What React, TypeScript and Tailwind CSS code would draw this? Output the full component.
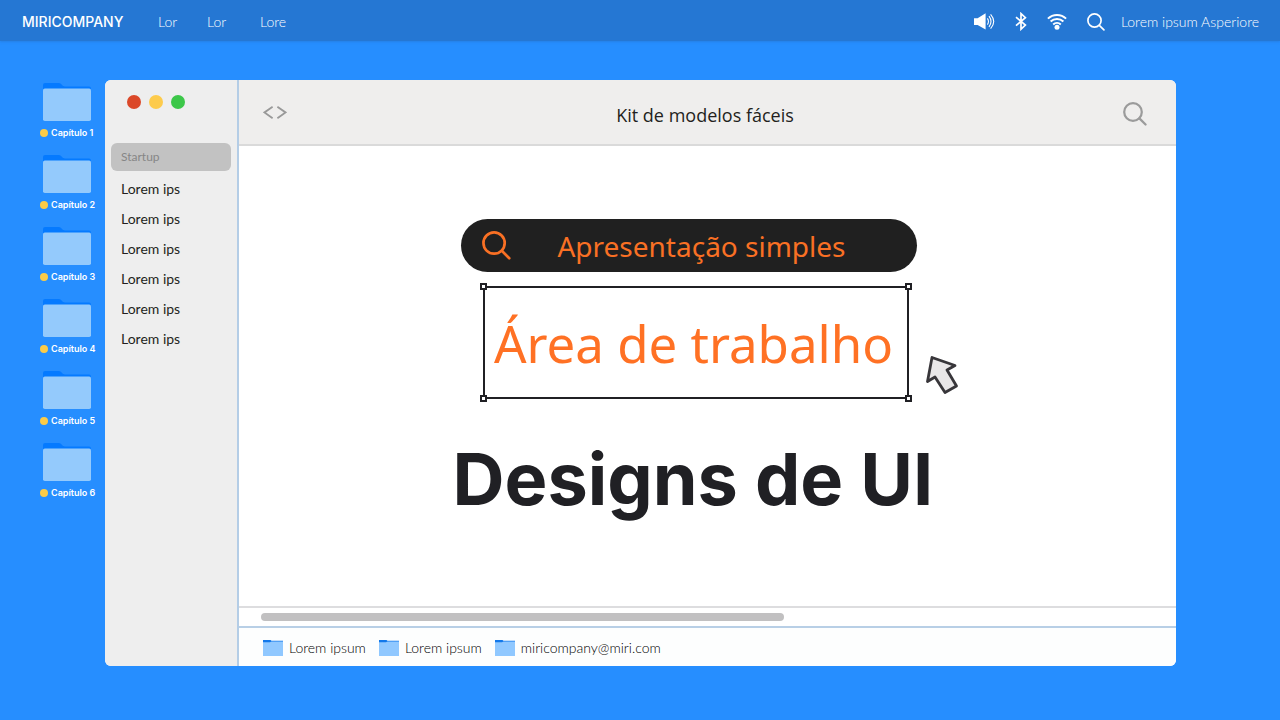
import React from "react";

const chapters = ["Capítulo 1", "Capítulo 2", "Capítulo 3", "Capítulo 4", "Capítulo 5", "Capítulo 6"];
const menu = ["Lorem ips", "Lorem ips", "Lorem ips", "Lorem ips", "Lorem ips", "Lorem ips"];
const bookmarks = ["Lorem ipsum", "Lorem ipsum", "miricompany@miri.com"];

function SearchIcon({ className, stroke }: { className: string; stroke: number }) {
  return (
    <svg viewBox="0 0 30 30" className={className} fill="none" stroke="currentColor" strokeWidth={stroke} strokeLinecap="round" aria-hidden="true">
      <circle cx="12.5" cy="12.5" r="11" />
      <path d="M20.5 20.5 28.2 28.2" />
    </svg>
  );
}

function VolumeIcon() {
  return (
    <svg viewBox="0 0 21 17" className="h-[17px] w-[21px]" fill="none" stroke="currentColor" aria-hidden="true">
      <path d="M0 5.2h3.6L11.6.3v16.2L3.6 12H0z" fill="currentColor" stroke="none" />
      <path d="M13.4 5.4c1.3 1.9 1.3 4.3 0 6.2M15 3.2c2.5 3.3 2.5 7.3 0 10.6M16.6 1.3c3.9 4.5 3.9 9.9 0 14.4" strokeWidth="1.1" />
    </svg>
  );
}

function BluetoothIcon() {
  return (
    <svg viewBox="0 0 12 19" className="h-[19px] w-3" fill="none" stroke="currentColor" strokeWidth="1.7" aria-hidden="true">
      <path d="M1 5.2 10.4 13 6 17.2V1.6l4.4 4.1L1 13.6" />
    </svg>
  );
}

function WifiIcon() {
  return (
    <svg viewBox="0 0 20 17" className="h-[17px] w-5" fill="none" stroke="currentColor" strokeWidth="2" aria-hidden="true">
      <path d="M.9 5.6a13.2 13.2 0 0 1 18.2 0M3.6 8.6a9.3 9.3 0 0 1 12.8 0M6.2 11.4a5.6 5.6 0 0 1 7.6 0" />
      <circle cx="10" cy="14.2" r="2.5" fill="currentColor" stroke="none" />
    </svg>
  );
}

function DesktopFolder() {
  return (
    <svg viewBox="0 0 48 38" className="ml-[3px] h-[38px] w-12" aria-hidden="true">
      <path d="M0 2a2 2 0 0 1 2-2h14c2 0 3.5 3.5 6 3.5h24a2 2 0 0 1 2 2V12H0z" fill="#057aff" />
      <rect y="5.5" width="48" height="32.5" rx="1.8" fill="#94cafc" />
    </svg>
  );
}

function SmallFolder() {
  return (
    <svg viewBox="0 0 20 16" className="h-4 w-5" aria-hidden="true">
      <path d="M0 0h7.5l1 .8H20V3H0z" fill="#1278ea" />
      <path d="M0 2.3h7L8.5 1.5H20V16H0z" fill="#90c8ff" />
    </svg>
  );
}

function Handle({ className }: { className: string }) {
  return <span className={`absolute size-[7px] border-2 border-[#202024] bg-white ${className}`} />;
}

export default function App() {
  return (
    <div className="flex min-h-screen flex-col bg-[#268eff] font-['Lato',sans-serif] text-[#231f20]">
      <header className="flex h-[41px] items-center bg-[#2577d3] pt-[2px] pr-[21px] pl-[22px] text-sm font-light text-white shadow-[0_1px_2px_rgba(37,119,211,0.6)]">
        <a href="#" className="w-[136px] font-['Inter',sans-serif] text-sm font-medium">MIRICOMPANY</a>
        <nav className="flex">
          <a href="#" className="w-[49px]">Lor</a>
          <a href="#" className="w-[53px]">Lor</a>
          <a href="#">Lore</a>
        </nav>
        <div className="ml-auto flex items-center gap-4">
          <div className="flex items-center gap-5">
            <button type="button" aria-label="Volume"><VolumeIcon /></button>
            <button type="button" aria-label="Bluetooth"><BluetoothIcon /></button>
            <button type="button" aria-label="Wi-Fi"><WifiIcon /></button>
            <button type="button" aria-label="Buscar"><SearchIcon className="size-[18px]" stroke={2.8} /></button>
          </div>
          <span className="whitespace-nowrap">Lorem ipsum Asperiore</span>
        </div>
      </header>

      <div className="flex flex-1 pt-[39px] pr-[104px] pb-[54px] pl-[40px]">
        <ul className="w-[65px] shrink-0 pt-[3px]">
          {chapters.map((name) => (
            <li key={name} className="h-[72px]">
              <a href="#" className="flex w-[54px] flex-col items-start">
                <DesktopFolder />
                <span className="mt-[6px] flex items-center gap-[3px] font-['Inter',sans-serif] text-[9px] leading-3 font-semibold whitespace-nowrap text-white">
                  <span className="size-2 rounded-full bg-[#fccb47]" />
                  {name}
                </span>
              </a>
            </li>
          ))}
        </ul>

        <div className="flex min-w-0 flex-1 overflow-hidden rounded-md bg-white">
          <aside className="w-[134px] shrink-0 border-r-2 border-[#b4cde6] bg-[#eeeeee] px-[6px] pt-[15px]">
            <div className="flex gap-2 pl-4">
              <button type="button" aria-label="Fechar" className="size-[14px] rounded-full bg-[#db4829]" />
              <button type="button" aria-label="Minimizar" className="size-[14px] rounded-full bg-[#fdcb4c]" />
              <button type="button" aria-label="Maximizar" className="size-[14px] rounded-full bg-[#3cc749]" />
            </div>
            <nav className="mt-[34px] flex flex-col text-sm">
              <a href="#" className="mb-[3px] flex h-7 w-[120px] items-center rounded-md bg-[#c2c2c2] pl-[10px] text-xs text-[#868686]">Startup</a>
              {menu.map((label, i) => (
                <a key={i} href="#" className="flex h-[30px] items-center pl-[10px]">{label}</a>
              ))}
            </nav>
          </aside>

          <div className="flex min-w-0 flex-1 flex-col">
            <div className="grid h-[66px] grid-cols-[1fr_auto_1fr] items-center border-b-2 border-[#dadada] bg-[#efeeed] pr-[29px] pl-6">
              <button type="button" aria-label="Código" className="justify-self-start text-[#999999]">
                <svg viewBox="0 0 24 13" className="h-[13px] w-6" fill="none" stroke="currentColor" strokeWidth="1.8" aria-hidden="true">
                  <path d="M9.6.8 1.5 6.4l8.1 5.8M14.4.8l8.1 5.6-8.1 5.8" />
                </svg>
              </button>
              <h2 className="pt-[6px] font-['Open_Sans','Noto_Sans',sans-serif] text-lg">Kit de modelos fáceis</h2>
              <button type="button" aria-label="Pesquisar" className="justify-self-end pt-1 text-[#9b9b9b]">
                <SearchIcon className="size-6" stroke={2.8} />
              </button>
            </div>

            <main className="flex flex-1 justify-center pt-[73px] pr-[30px]">
              <div className="w-[480px]">
                <label className="ml-2 flex h-[53px] w-[456px] items-center rounded-full bg-[#202020] pr-[36px] pl-[21px] text-[#f97024]">
                  <SearchIcon className="size-[29px] shrink-0" stroke={2.8} />
                  <input
                    type="text"
                    aria-label="Apresentação"
                    defaultValue="Apresentação simples"
                    className="ml-3 min-w-0 flex-1 bg-transparent text-center font-['Noto_Sans',sans-serif] text-[28px] leading-9 outline-none"
                  />
                </label>
                <div className="relative mt-[14px] ml-[30px] flex h-[113px] w-[426px] items-center justify-center border-2 border-[#202024] pt-[2px] pr-1">
                  <p className="font-['Noto_Sans',sans-serif] text-[51px] leading-none whitespace-nowrap text-[#ff7124]">Área de trabalho</p>
                  <Handle className="-top-[5px] -left-[5px]" />
                  <Handle className="-top-[5px] -right-[5px]" />
                  <Handle className="-bottom-[5px] -left-[5px]" />
                  <Handle className="-right-[5px] -bottom-[5px]" />
                  <svg viewBox="0 0 34 40" className="absolute top-[67px] left-[440px] h-10 w-[34px]" fill="#e9e7e8" stroke="#38363a" strokeWidth="2.8" strokeLinejoin="round" aria-hidden="true">
                    <path d="M7 2.5 30 10.5 22 15 31.5 31 20 37.5 10 22 2.5 26.5z" />
                  </svg>
                </div>
                <h1 className="mt-[35px] font-['Inter',sans-serif] text-[72px] leading-[90px] font-bold whitespace-nowrap text-[#202024]">Designs de UI</h1>
              </div>
            </main>

            <div className="flex h-[22px] items-center border-t-2 border-b-2 border-t-[#dddddf] border-b-[#b8cfe6] pl-[22px]">
              <div className="h-2 w-4/7 rounded-full bg-[#c1c0c1]" />
            </div>
            <footer className="flex h-[38px] items-center gap-[13px] bg-[#fdfefe] pt-px pl-6 text-sm font-light text-black">
              {bookmarks.map((label, i) => (
                <a key={i} href="#" className="flex items-center gap-[6px]">
                  <SmallFolder />
                  {label}
                </a>
              ))}
            </footer>
          </div>
        </div>
      </div>
    </div>
  );
}
